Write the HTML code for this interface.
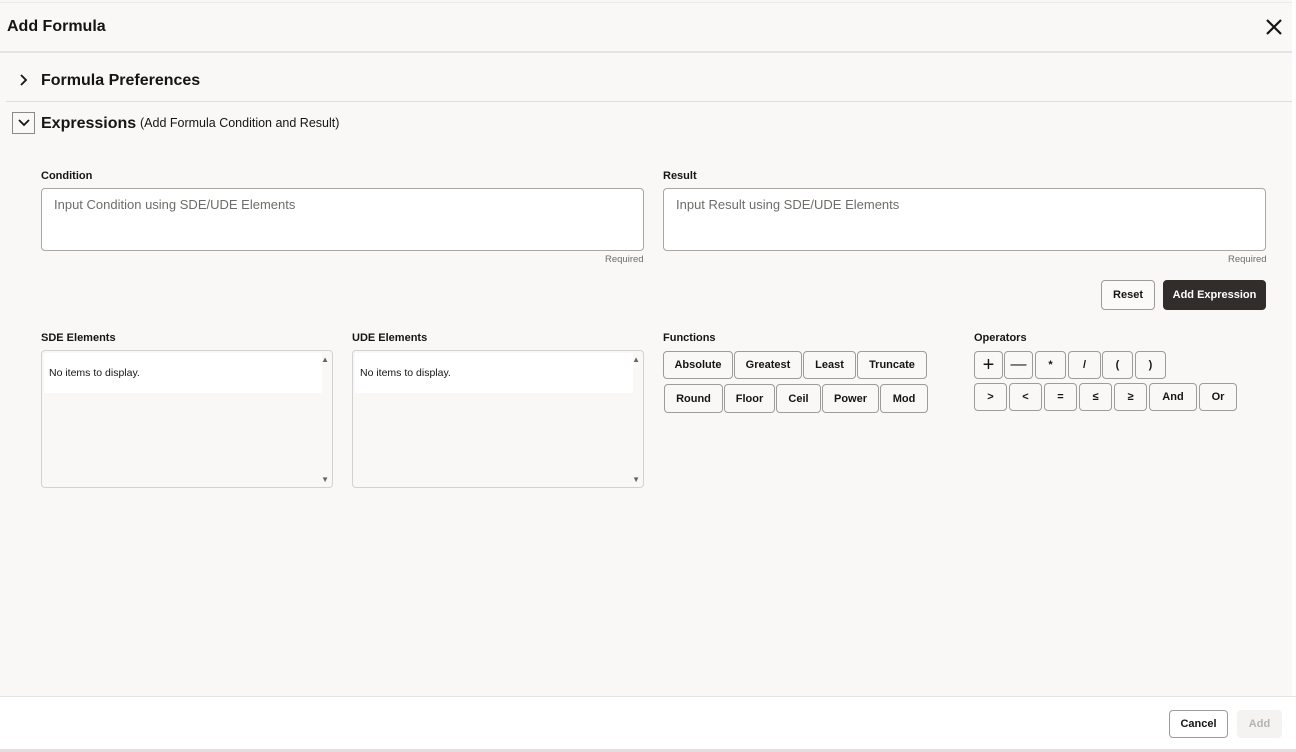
<!DOCTYPE html>
<html><head><meta charset="utf-8"><style>
*{box-sizing:border-box;margin:0;padding:0}
body{width:1296px;height:752px;overflow:hidden;background:#f9f8f6;font-family:"Liberation Sans",sans-serif;color:#161513;position:relative}
.a{position:absolute}
.lbl{font-size:11px;font-weight:bold;color:#161513}
.ta{background:#fff;border:1px solid #a9a7a3;border-radius:4px;font-size:13px;color:#6f6c68;padding:8px 12px}
.req{font-size:9.5px;color:#6f6c68}
.b{position:absolute;border:1px solid #9e9c98;border-radius:4px;background:#f9f8f6;font-size:11px;font-weight:bold;color:#161513;display:flex;align-items:center;justify-content:center}
.lst{background:#f9f8f6;border:1px solid #d4d2ce;border-radius:4px}
.lst .row{position:absolute;left:2px;top:2px;width:278px;height:40px;background:#fff;font-size:10.5px;padding:14px 5px}
</style></head><body>
<div class="a" style="left:0;top:2px;width:1296px;height:1px;background:#ecebe8"></div>
<div class="a" style="left:7px;top:18px;font-size:16px;font-weight:bold">Add Formula</div>
<svg class="a" style="left:1265px;top:18px" width="18" height="18" viewBox="0 0 18 18"><path d="M2 2L16 16M16 2L2 16" stroke="#161513" stroke-width="2.2"/></svg>
<div class="a" style="left:0;top:51px;width:1292px;height:2px;background:#e6e4e0"></div>
<svg class="a" style="left:18px;top:73px" width="10" height="14" viewBox="0 0 10 14"><path d="M3 2L8 7L3 12" fill="none" stroke="#161513" stroke-width="1.8"/></svg>
<div class="a" style="left:41px;top:72px;font-size:16px;font-weight:bold">Formula Preferences</div>
<div class="a" style="left:6px;top:101px;width:1286px;height:1px;background:#e0deda"></div>
<div class="a" style="left:12px;top:112px;width:23px;height:22px;border:1px solid #8c8a86;background:#f9f8f6"></div>
<svg class="a" style="left:17px;top:118px" width="14" height="10" viewBox="0 0 14 10"><path d="M2 2L7 7L12 2" fill="none" stroke="#161513" stroke-width="1.8"/></svg>
<div class="a" style="left:41px;top:115px;font-size:16px;font-weight:bold">Expressions</div>
<div class="a" style="left:140px;top:116px;font-size:12.5px;color:#161513">(Add Formula Condition and Result)</div>

<div class="a lbl" style="left:41px;top:170px">Condition</div>
<div class="a ta" style="left:41px;top:188px;width:603px;height:63px">Input Condition using SDE/UDE Elements</div>
<div class="a req" style="left:605px;top:254px">Required</div>
<div class="a lbl" style="left:663px;top:170px">Result</div>
<div class="a ta" style="left:663px;top:188px;width:603px;height:63px">Input Result using SDE/UDE Elements</div>
<div class="a req" style="left:1228px;top:254px">Required</div>

<div class="b" style="left:1101px;top:280px;width:54px;height:30px;background:#fbfaf8">Reset</div>
<div class="b" style="left:1163px;top:280px;width:103px;height:30px;background:#312d2a;border-color:#312d2a;color:#fff">Add Expression</div>

<div class="a lbl" style="left:41px;top:332px">SDE Elements</div>
<div class="a lst" style="left:41px;top:350px;width:292px;height:138px"><div class="row">No items to display.</div>
<div class="a" style="right:3px;top:4px;font-size:8px;color:#666">▲</div><div class="a" style="right:3px;bottom:3px;font-size:8px;color:#666">▼</div></div>
<div class="a lbl" style="left:352px;top:332px">UDE Elements</div>
<div class="a lst" style="left:352px;top:350px;width:292px;height:138px"><div class="row">No items to display.</div>
<div class="a" style="right:3px;top:4px;font-size:8px;color:#666">▲</div><div class="a" style="right:3px;bottom:3px;font-size:8px;color:#666">▼</div></div>

<div class="a lbl" style="left:663px;top:332px">Functions</div>
<div class="b" style="left:663px;top:351px;width:70px;height:28px">Absolute</div>
<div class="b" style="left:734px;top:351px;width:68px;height:28px">Greatest</div>
<div class="b" style="left:803px;top:351px;width:53px;height:28px">Least</div>
<div class="b" style="left:857px;top:351px;width:70px;height:28px">Truncate</div>
<div class="b" style="left:664px;top:384px;width:59px;height:29px">Round</div>
<div class="b" style="left:724px;top:384px;width:51px;height:29px">Floor</div>
<div class="b" style="left:776px;top:384px;width:45px;height:29px">Ceil</div>
<div class="b" style="left:822px;top:384px;width:57px;height:29px">Power</div>
<div class="b" style="left:880px;top:384px;width:48px;height:29px">Mod</div>

<div class="a lbl" style="left:974px;top:332px">Operators</div>
<div class="b" style="left:974px;top:351px;width:29px;height:28px;font-size:20px;font-weight:normal">+</div>
<div class="b" style="left:1004px;top:351px;width:29px;height:28px;font-size:16px;font-weight:normal">—</div>
<div class="b" style="left:1035px;top:351px;width:31px;height:28px">*</div>
<div class="b" style="left:1068px;top:351px;width:33px;height:28px">/</div>
<div class="b" style="left:1102px;top:351px;width:31px;height:28px">(</div>
<div class="b" style="left:1135px;top:351px;width:31px;height:28px">)</div>
<div class="b" style="left:974px;top:383px;width:33px;height:28px">&gt;</div>
<div class="b" style="left:1009px;top:383px;width:33px;height:28px">&lt;</div>
<div class="b" style="left:1044px;top:383px;width:33px;height:28px">=</div>
<div class="b" style="left:1079px;top:383px;width:33px;height:28px">≤</div>
<div class="b" style="left:1114px;top:383px;width:33px;height:28px">≥</div>
<div class="b" style="left:1149px;top:383px;width:48px;height:28px">And</div>
<div class="b" style="left:1199px;top:383px;width:38px;height:28px">Or</div>

<div class="a" style="left:0;top:696px;width:1296px;height:53px;background:#fff;border-top:1px solid #e6e4e0"></div>
<div class="b" style="left:1169px;top:710px;width:59px;height:28px;background:#fff">Cancel</div>
<div class="b" style="left:1237px;top:710px;width:45px;height:28px;background:#f4f3f1;border-color:#f4f3f1;color:#b5b3b0">Add</div>
<div class="a" style="left:0;top:749px;width:1296px;height:3px;background:#e3dde0"></div>
<div class="a" style="left:1292px;top:0;width:4px;height:696px;background:#fff"></div>
</body></html>
